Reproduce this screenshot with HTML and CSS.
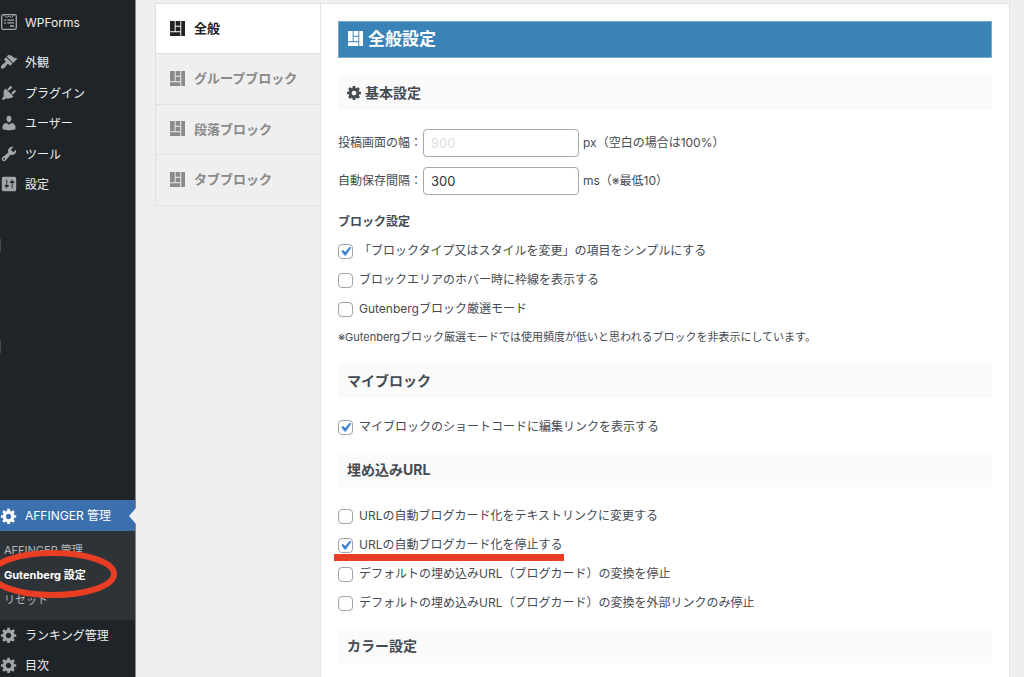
FILE: index.html
```html
<!DOCTYPE html>
<html lang="ja">
<head>
<meta charset="utf-8">
<title>Gutenberg 設定</title>
<meta name="viewport" content="width=device-width, initial-scale=1">
<link rel="stylesheet" href="styles.css">
</head>
<body>
<svg class="sprite" aria-hidden="true">
  <symbol id="i-layout" viewBox="2 2 16 16"><path d="M2 2h5v11H2V2zm6 0h5v5H8V2zm6 0h4v16h-4V2zM8 8h5v5H8V8zm-6 6h11v4H2v-4z"/></symbol>
  <symbol id="i-gear" viewBox="0 0 20 20"><path d="M18 12h-2.18c-.17.7-.44 1.35-.81 1.93l1.54 1.54-2.1 2.1-1.54-1.54c-.58.36-1.23.63-1.91.79V19H8v-2.18c-.68-.16-1.33-.43-1.91-.79l-1.54 1.54-2.12-2.12 1.54-1.54c-.36-.58-.63-1.23-.79-1.91H1V9.03h2.17c.16-.7.44-1.35.8-1.94L2.43 5.55l2.1-2.1 1.54 1.54c.58-.37 1.24-.64 1.93-.81V2h3v2.18c.68.16 1.33.43 1.91.79l1.54-1.54 2.12 2.12-1.54 1.54c.36.59.64 1.24.8 1.94H18V12zm-8.5 1.5c1.66 0 3-1.34 3-3s-1.34-3-3-3-3 1.34-3 3 1.34 3 3 3z"/></symbol>
  <symbol id="i-cog" viewBox="0 -128 1536 1536"><path fill-rule="evenodd" d="M1024 640q0-106-75-181t-181-75-181 75-75 181 75 181 181 75 181-75 75-181zm512-109v222q0 12-8 23t-20 13l-185 28q-19 54-39 91 35 50 107 138 10 12 10 25t-9 23q-27 37-99 108t-94 71q-12 0-26-9l-138-108q-44 23-91 38-16 136-29 186-7 28-36 28h-222q-14 0-24.500-8.500t-11.500-21.500l-28-184q-49-16-90-37l-141 107q-10 9-25 9-14 0-25-11-126-114-165-168-7-10-7-23 0-12 8-23 15-21 51-66.500t54-70.500q-27-50-41-99l-183-27q-13-2-21-12.500t-8-23.500v-222q0-12 8-23t19-13l186-28q14-46 39-92-40-57-107-138-10-12-10-24 0-10 9-23 26-36 98.500-107.500t94.500-71.500q13 0 26 10l138 107q44-23 91-38 16-136 29-186 7-28 36-28h222q14 0 24.500 8.500t11.500 21.500l28 184q49 16 90 37l142-107q9-9 24-9 13 0 25 10 129 119 165 170 7 8 7 22 0 12-8 23-15 21-51 66.500t-54 70.500q26 50 41 98l183 28q13 2 21 12.500t8 23.500z"/></symbol>
</svg>

<div class="admin">
  <nav class="sidebar" aria-label="管理メニュー">
    <ul class="menu menu-top">
      <li><a class="menu-link" href="#">
        <svg class="menu-icon" viewBox="0 0 18 18"><rect x="1.700" y="1.700" width="14.600" height="14.600" rx="1.500" fill="none" stroke="currentColor" stroke-width="1.300"/><path d="M4 2l2.500 2.500L9 3l2.500 1.500L14 2" fill="none" stroke="currentColor"/><path d="M4 6.500h2v1.300H4zM7.200 6.500h6.800v1.300H7.200zM4 9.300h2v1.300H4zM7.200 9.300h6.800v1.300H7.200zM10 12.300h4v1.500h-4z"/></svg><span>WPForms</span></a></li>
    </ul>
    <ul class="menu menu-core">
      <li><a class="menu-link" href="#">
        <svg class="menu-icon" viewBox="0 0 20 20"><path d="M14.480 11.060L7.410 3.990l1.500-1.500c.5-.56 2.300-.47 3.510.32 1.210.8 1.430 1.280 2.910 2.100 1.180.64 2.450 1.260 4.450.85zm-.71.71L6.700 4.700 4.930 6.470c-.39.39-.39 1.020 0 1.410l1.060 1.060c.39.39.39 1.030 0 1.420-.6.6-1.430 1.110-2.210 1.690-.35.26-.7.53-1.010.84C1.430 14.230.4 16.080 1.400 17.070c.99 1 2.840-.03 4.180-1.360.31-.31.58-.66.85-1.020.57-.78 1.080-1.610 1.690-2.210.39-.39 1.020-.39 1.410 0l1.060 1.060c.39.39 1.020.39 1.410 0z"/></svg><span>外観</span></a></li>
      <li><a class="menu-link" href="#">
        <svg class="menu-icon" viewBox="0 0 20 20"><path d="M13.110 4.360L9.870 7.600 8 5.730l3.240-3.240c.35-.34 1.050-.2 1.560.32.52.51.66 1.210.31 1.550zm-8 1.770l.91-1.120 9.010 9.010-1.190.84c-.71.71-2.630 1.160-3.820 1.160H6.140L4.900 17.260c-.59.59-1.540.59-2.120 0-.59-.58-.59-1.530 0-2.120l1.240-1.240v-3.880c0-1.130.4-3.190 1.090-3.890zm7.260 3.970l3.240-3.240c.34-.35 1.040-.21 1.550.31.52.51.66 1.210.31 1.550l-3.240 3.250z"/></svg><span>プラグイン</span></a></li>
      <li><a class="menu-link" href="#">
        <svg class="menu-icon" viewBox="0 0 20 20"><path d="M10 9.250c-2.270 0-2.730-3.440-2.730-3.440C7 4.020 7.820 2 9.970 2c2.160 0 2.980 2.020 2.710 3.810 0 0-.41 3.440-2.680 3.440zm0 2.570L12.720 10c2.390 0 4.520 2.330 4.520 4.530v2.490s-3.650 1.130-7.240 1.130c-3.650 0-7.240-1.130-7.240-1.130v-2.490c0-2.250 1.940-4.480 4.470-4.480z"/></svg><span>ユーザー</span></a></li>
      <li><a class="menu-link" href="#">
        <svg class="menu-icon" viewBox="0 0 20 20"><path d="M16.680 9.770c-1.340 1.340-3.300 1.670-4.950.99l-5.410 6.520c-.99.99-2.590.99-3.580 0s-.99-2.590 0-3.570l6.520-5.420c-.68-1.650-.35-3.610.99-4.950 1.280-1.280 3.120-1.620 4.720-1.060l-2.890 2.890 2.820 2.820 2.860-2.870c.53 1.580.18 3.390-1.080 4.650zM3.810 16.210c.4.39 1.040.39 1.430 0 .4-.4.4-1.040 0-1.430-.39-.4-1.030-.4-1.430 0-.39.39-.39 1.030 0 1.430z"/></svg><span>ツール</span></a></li>
      <li><a class="menu-link" href="#">
        <svg class="menu-icon" viewBox="0 0 20 20"><path d="M18 16V4c0-1.100-.9-2-2-2H4c-1.100 0-2 .9-2 2v12c0 1.100.9 2 2 2h12c1.100 0 2-.9 2-2zM8 11h1c.55 0 1 .45 1 1s-.45 1-1 1H8v1.500c0 .28-.22.5-.5.5s-.5-.22-.5-.5V13H6c-.55 0-1-.45-1-1s.45-1 1-1h1V5.500c0-.28.22-.5.5-.5s.5.22.5.5V11zm5-2h-1c-.55 0-1-.45-1-1s.45-1 1-1h1V5.500c0-.28.22-.5.5-.5s.5.22.5.5V7h1c.55 0 1 .45 1 1s-.45 1-1 1h-1v5.500c0 .28-.22.5-.5.5s-.5-.22-.5-.5V9z"/></svg><span>設定</span></a></li>
    </ul>
    <div class="menu-blank"><span class="edge"></span><span class="edge"></span></div>
    <ul class="menu">
      <li>
        <a class="menu-link menu-current" href="#"><svg class="menu-icon"><use href="#i-gear"/></svg>AFFINGER 管理</a>
        <ul class="submenu">
          <li><a href="#">AFFINGER 管理</a></li>
          <li class="sub-current"><a href="#" aria-current="page">Gutenberg 設定</a>
            <svg class="ring" viewBox="0 0 130 50" aria-hidden="true"><ellipse cx="65" cy="25" rx="61" ry="21"/></svg></li>
          <li><a href="#">リセット</a></li>
        </ul>
      </li>
      <li><a class="menu-link" href="#"><svg class="menu-icon"><use href="#i-gear"/></svg><span>ランキング管理</span></a></li>
      <li><a class="menu-link" href="#"><svg class="menu-icon"><use href="#i-gear"/></svg><span>目次</span></a></li>
    </ul>
  </nav>

  <main class="content">
    <div class="tabs" role="tablist">
      <button class="tab tab-on" type="button" role="tab" aria-selected="true"><svg class="block-icon"><use href="#i-layout"/></svg>全般</button>
      <button class="tab" type="button" role="tab" aria-selected="false"><svg class="block-icon"><use href="#i-layout"/></svg>グループブロック</button>
      <button class="tab" type="button" role="tab" aria-selected="false"><svg class="block-icon"><use href="#i-layout"/></svg>段落ブロック</button>
      <button class="tab" type="button" role="tab" aria-selected="false"><svg class="block-icon"><use href="#i-layout"/></svg>タブブロック</button>
    </div>

    <form class="panel">
      <h2 class="title"><svg class="block-icon"><use href="#i-layout"/></svg>全般設定</h2>

      <h3 class="section"><svg class="cog-icon"><use href="#i-cog"/></svg>基本設定</h3>
      <div class="fields">
        <div class="field"><label for="width">投稿画面の幅：</label><input id="width" type="text" placeholder="900"><span>px（空白の場合は100%）</span></div>
        <div class="field"><label for="autosave">自動保存間隔：</label><input id="autosave" type="text" value="300"><span>ms（※最低10）</span></div>
      </div>
      <h4 class="subhead">ブロック設定</h4>
      <label class="check"><input type="checkbox" checked><span>「ブロックタイプ又はスタイルを変更」の項目をシンプルにする</span></label>
      <label class="check"><input type="checkbox"><span>ブロックエリアのホバー時に枠線を表示する</span></label>
      <label class="check"><input type="checkbox"><span>Gutenbergブロック厳選モード</span></label>
      <p class="note">※Gutenbergブロック厳選モードでは使用頻度が低いと思われるブロックを非表示にしています。</p>

      <h3 class="section">マイブロック</h3>
      <label class="check"><input type="checkbox" checked><span>マイブロックのショートコードに編集リンクを表示する</span></label>

      <h3 class="section">埋め込みURL</h3>
      <label class="check"><input type="checkbox"><span>URLの自動ブログカード化をテキストリンクに変更する</span></label>
      <label class="check marked"><input type="checkbox" checked><span>URLの自動ブログカード化を停止する</span></label>
      <label class="check"><input type="checkbox"><span>デフォルトの埋め込みURL（ブログカード）の変換を停止</span></label>
      <label class="check"><input type="checkbox"><span>デフォルトの埋め込みURL（ブログカード）の変換を外部リンクのみ停止</span></label>

      <h3 class="section">カラー設定</h3>
    </form>
  </main>
</div>
</body>
</html>
```
FILE: styles.css
```css
* { box-sizing: border-box; }

body {
  margin: 0;
  background: #efefef;
  color: #444b52;
  font: 12px/16px Inter, "Noto Sans CJK JP", sans-serif;
}

ul { margin: 0; padding: 0; list-style: none; }
a { color: inherit; text-decoration: none; }
svg { flex: none; fill: currentColor; }
.sprite { display: none; }

.admin {
  display: flex;
  height: 100vh;
  overflow: hidden;
}

/* Sidebar */
.sidebar {
  flex: none;
  width: 136px;
  padding-top: 7px;
  background: #1f2428;
  border-right: 1px solid #85888a;
  color: #ececed;
}
.menu-core {
  display: grid;
  grid-auto-rows: 1fr;
  height: 153px;
  margin-top: 10px;
}
.menu-link {
  display: flex;
  align-items: center;
  gap: 7px;
  height: 30px;
}
.menu-link span { padding-top: 2px; }
.menu-icon { width: 18px; height: 18px; color: #a2a6aa; }
.menu-blank {
  display: flex;
  flex-direction: column;
  gap: 88px;
  height: 300px;
  padding-top: 39px;
}
.edge { width: 1px; height: 13px; background: #454a4e; }
.menu-current {
  position: relative;
  height: 31px;
  background: #3b6fad;
  color: #fff;
}
.menu-current .menu-icon { color: #fff; }
.menu-current::after {
  content: "";
  position: absolute;
  top: 8px;
  right: -1px;
  border: 8px solid transparent;
  border-right: 7px solid #efefef;
  border-left: 0;
}
.submenu {
  padding: 7px 4px;
  background: #2e3337;
  color: #b5b8ba;
  font-size: 11px;
}
.submenu li { height: 25px; line-height: 25px; }
.submenu .sub-current {
  position: relative;
  color: #fff;
  font-weight: 700;
}
.ring {
  position: absolute;
  top: -14px;
  left: -16px;
  width: 130px;
  height: 50px;
  fill: none;
  stroke: #e93d24;
  stroke-width: 6px;
}

/* Tabs */
.content {
  display: flex;
  flex: 1;
  align-items: flex-start;
  min-width: 0;
  padding: 3px 14px 0 19px;
}
.tabs {
  display: grid;
  flex: none;
  grid-auto-rows: 1fr;
  width: 165px;
  height: 203px;
  border: 1px solid #e1e1e1;
  border-right: 0;
}
.tab {
  display: flex;
  align-items: center;
  gap: 9px;
  padding: 0 14px 1px;
  border: 0;
  border-bottom: 1px solid #e1e1e1;
  background: #efefef;
  color: #8a8a8a;
  font: inherit;
  font-size: 13px;
  font-weight: 700;
}
.tab:last-child { border-bottom: 0; }
.tab-on { background: #fff; color: #222; }
.block-icon { width: 15px; height: 15px; }

/* Settings panel */
.panel {
  flex: 1;
  min-width: 0;
  min-height: 100vh;
  padding: 17px 17px 0;
  border: 1px solid #e4e4e4;
  background: #fff;
}
.title {
  display: flex;
  align-items: center;
  gap: 5px;
  height: 37px;
  margin: 0 0 18px;
  padding: 0 9px 2px;
  border: 1px solid #78a9ce;
  background: #3a83b6;
  color: #fff;
  font-size: 17px;
}
.section {
  display: flex;
  align-items: center;
  gap: 4px;
  height: 34px;
  margin: 12px 0 14px;
  padding: 0 9px;
  background: #fafafa;
  font-size: 14px;
}
.cog-icon { width: 14px; height: 14px; }
.fields {
  display: grid;
  gap: 10px;
  padding-top: 5px;
}
.field { display: flex; align-items: center; gap: 4px; }
.field label { width: 81px; white-space: nowrap; }
.field input {
  width: 156px;
  height: 28px;
  padding: 0 7px;
  border: 1px solid #a5a7aa;
  border-radius: 4px;
  background: #fff;
  color: #2c3338;
  font: inherit;
  font-size: 13px;
}
.field input::placeholder { color: #dedede; }
.subhead {
  margin: 12px 0 0;
  font-size: 12px;
  line-height: 29px;
}
.check {
  display: flex;
  align-items: center;
  gap: 6px;
  height: 29px;
}
.check input {
  flex: none;
  width: 15px;
  height: 15px;
  margin: 1px 0 0;
  appearance: none;
  border: 1px solid #a0a3a7;
  border-radius: 4px;
  background: #fff;
}
.check input:checked {
  background: #fff url("data:image/svg+xml,%3Csvg xmlns='http://www.w3.org/2000/svg' viewBox='0 0 20 20'%3E%3Cpath d='M14.830 4.890l1.340.94-5.810 8.380H9.020L5.780 9.670l1.340-1.250 2.570 2.400z' fill='%233b7fd0' stroke='%233b7fd0' stroke-width='.5'/%3E%3C/svg%3E") center / 18px 18px no-repeat;
}
.marked { position: relative; width: fit-content; }
.marked::after {
  content: "";
  position: absolute;
  right: -2px;
  bottom: -2px;
  left: -4px;
  height: 7px;
  background: #e93d24;
}
.note {
  margin: 0;
  font-size: 11px;
  line-height: 29px;
}
```
